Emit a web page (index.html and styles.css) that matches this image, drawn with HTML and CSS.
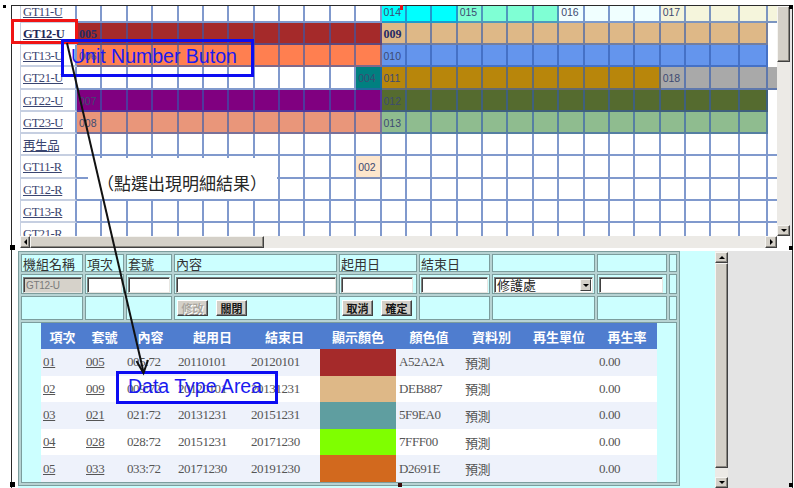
FILE: index.html
```html
<!DOCTYPE html>
<html lang="zh-Hant">
<head>
<meta charset="utf-8">
<title>機組套號排程</title>
<link rel="stylesheet" href="styles.css">
</head>
<body>
<div class="doc">
  <div class="shot">
    <!-- schedule frame -->
    <div class="upper">
      <div class="gutter g-up"></div>
      <div class="plan-view">
        <table class="plan">
          <colgroup>
            <col class="col-unit">
            <col><col><col><col><col><col><col><col><col><col>
            <col><col><col><col><col><col><col><col><col><col>
            <col><col><col><col><col>
            <col class="col-wide"><col class="col-wide"><col class="col-wide">
          </colgroup>
          <tbody>
            <tr class="r-a">
              <th><a href="#">GT11-U</a></th>
              <td></td><td></td><td></td><td></td><td></td><td></td><td></td><td></td><td></td><td></td><td></td><td></td>
              <td><span>014</span></td><td></td><td></td>
              <td><span>015</span></td><td></td><td></td><td></td>
              <td><span>016</span></td><td></td><td></td><td></td>
              <td><span>017</span></td><td></td><td></td><td></td><td></td>
            </tr>
            <tr class="r-b">
              <th><a href="#" class="on">GT12-U</a></th>
              <td><b>005</b></td><td></td><td></td><td></td><td></td><td></td><td></td><td></td><td></td><td></td><td></td><td></td>
              <td><b>009</b></td><td></td><td></td><td></td><td></td><td></td><td></td><td></td><td></td><td></td><td></td><td></td><td></td><td></td><td></td>
            </tr>
            <tr class="r-c">
              <th><a href="#">GT13-U</a></th>
              <td><span>006</span></td><td></td><td></td><td></td><td></td><td></td><td></td><td></td><td></td><td></td><td></td><td></td>
              <td><span>010</span></td><td></td><td></td><td></td><td></td><td></td><td></td><td></td><td></td><td></td><td></td><td></td><td></td><td></td><td></td>
            </tr>
            <tr class="r-d">
              <th><a href="#">GT21-U</a></th>
              <td></td><td></td><td></td><td></td><td></td><td></td><td></td><td></td><td></td><td></td><td></td>
              <td><span>004</span></td>
              <td><span>011</span></td><td></td><td></td><td></td><td></td><td></td><td></td><td></td><td></td><td></td><td></td>
              <td><span>018</span></td><td></td><td></td><td></td><td></td>
            </tr>
            <tr class="r-e">
              <th><a href="#">GT22-U</a></th>
              <td><span>007</span></td><td></td><td></td><td></td><td></td><td></td><td></td><td></td><td></td><td></td><td></td><td></td>
              <td><span>012</span></td><td></td><td></td><td></td><td></td><td></td><td></td><td></td><td></td><td></td><td></td><td></td><td></td><td></td><td></td>
            </tr>
            <tr class="r-f">
              <th><a href="#">GT23-U</a></th>
              <td><span>008</span></td><td></td><td></td><td></td><td></td><td></td><td></td><td></td><td></td><td></td><td></td><td></td>
              <td><span>013</span></td><td></td><td></td><td></td><td></td><td></td><td></td><td></td><td></td><td></td><td></td><td></td><td></td><td></td><td></td>
            </tr>
            <tr>
              <th><a href="#">再生品</a></th>
              <td></td><td></td><td></td><td></td><td></td><td></td><td></td><td></td><td></td><td></td><td></td><td></td><td></td><td></td>
              <td></td><td></td><td></td><td></td><td></td><td></td><td></td><td></td><td></td><td></td><td></td><td></td><td></td><td></td>
            </tr>
            <tr class="r-h">
              <th><a href="#">GT11-R</a></th>
              <td></td><td></td><td></td><td></td><td></td><td></td><td></td><td></td><td></td><td></td><td></td>
              <td><span>002</span></td>
              <td></td><td></td><td></td><td></td><td></td><td></td><td></td><td></td><td></td><td></td><td></td><td></td><td></td><td></td><td></td><td></td>
            </tr>
            <tr>
              <th><a href="#">GT12-R</a></th>
              <td></td><td></td><td></td><td></td><td></td><td></td><td></td><td></td><td></td><td></td><td></td><td></td><td></td><td></td>
              <td></td><td></td><td></td><td></td><td></td><td></td><td></td><td></td><td></td><td></td><td></td><td></td><td></td><td></td>
            </tr>
            <tr>
              <th><a href="#">GT13-R</a></th>
              <td></td><td></td><td></td><td></td><td></td><td></td><td></td><td></td><td></td><td></td><td></td><td></td><td></td><td></td>
              <td></td><td></td><td></td><td></td><td></td><td></td><td></td><td></td><td></td><td></td><td></td><td></td><td></td><td></td>
            </tr>
            <tr>
              <th><a href="#">GT21-R</a></th>
              <td></td><td></td><td></td><td></td><td></td><td></td><td></td><td></td><td></td><td></td><td></td><td></td><td></td><td></td>
              <td></td><td></td><td></td><td></td><td></td><td></td><td></td><td></td><td></td><td></td><td></td><td></td><td></td><td></td>
            </tr>
          </tbody>
        </table>
      </div>
      <div class="vbar vbar-up">
        <div class="sb-thumb thumb-up"></div>
        <div class="sb-track"></div>
        <div class="sb-btn sb-v"><i class="tri tri-down"></i></div>
      </div>
      <div class="edge"></div>
      <div class="hbar">
        <div class="sb-btn sb-h sb-left"><i class="tri tri-left"></i></div>
        <div class="sb-thumb thumb-h"></div>
        <div class="sb-track"></div>
        <div class="sb-btn sb-h sb-right"><i class="tri tri-right"></i></div>
      </div>
      <div class="corner"></div>
    </div>

    <!-- detail frame -->
    <div class="lower">
      <div class="gutter"></div>
      <div class="panel">
        <table class="editor">
          <tr class="ed-head">
            <td class="w1">機組名稱</td>
            <td class="w2">項次</td>
            <td class="w3">套號</td>
            <td class="w4">內容</td>
            <td class="w5">起用日</td>
            <td class="w6">結束日</td>
            <td class="w7"></td>
            <td class="w8"></td>
            <td class="w9"></td>
          </tr>
          <tr class="ed-fields">
            <td><input class="fld f-unit" value="GT12-U" disabled></td>
            <td><input class="fld f-item"></td>
            <td><input class="fld f-set"></td>
            <td><input class="fld f-text"></td>
            <td><input class="fld f-start"></td>
            <td><input class="fld f-end"></td>
            <td><div class="pick"><span>修護處</span><span class="pick-btn"><i class="tri tri-down"></i></span></div></td>
            <td><input class="fld f-rate"></td>
            <td></td>
          </tr>
          <tr class="ed-actions">
            <td></td><td></td><td></td>
            <td><button class="btn" disabled>修改</button><button class="btn">關閉</button></td>
            <td><button class="btn">取消</button><button class="btn">確定</button></td>
            <td></td><td></td><td></td><td></td>
          </tr>
          <tr class="ed-list">
            <td colspan="9">
              <table class="sets">
                <colgroup>
                  <col class="k-item"><col class="k-set"><col class="k-text"><col class="k-date"><col class="k-date2">
                  <col class="k-swatch"><col class="k-hex"><col class="k-type"><col class="k-unit"><col class="k-rate">
                </colgroup>
                <thead>
                  <tr><th>項次</th><th>套號</th><th>內容</th><th>起用日</th><th>結束日</th><th>顯示顏色</th><th>顏色值</th><th>資料別</th><th>再生單位</th><th>再生率</th></tr>
                </thead>
                <tbody>
                  <tr><td><a href="#">01</a></td><td><a href="#">005</a></td><td>005:72</td><td>20110101</td><td>20120101</td><td class="swatch" style="background:#A52A2A"></td><td class="pad3">A52A2A</td><td class="pad3">預測</td><td></td><td>0.00</td></tr>
                  <tr><td><a href="#">02</a></td><td><a href="#">009</a></td><td>009:72</td><td>20120101</td><td>20131231</td><td class="swatch" style="background:#DEB887"></td><td class="pad3">DEB887</td><td class="pad3">預測</td><td></td><td>0.00</td></tr>
                  <tr><td><a href="#">03</a></td><td><a href="#">021</a></td><td>021:72</td><td>20131231</td><td>20151231</td><td class="swatch" style="background:#5F9EA0"></td><td class="pad3">5F9EA0</td><td class="pad3">預測</td><td></td><td>0.00</td></tr>
                  <tr><td><a href="#">04</a></td><td><a href="#">028</a></td><td>028:72</td><td>20151231</td><td>20171230</td><td class="swatch" style="background:#7FFF00"></td><td class="pad3">7FFF00</td><td class="pad3">預測</td><td></td><td>0.00</td></tr>
                  <tr><td><a href="#">05</a></td><td><a href="#">033</a></td><td>033:72</td><td>20171230</td><td>20191230</td><td class="swatch" style="background:#D2691E"></td><td class="pad3">D2691E</td><td class="pad3">預測</td><td></td><td>0.00</td></tr>
                </tbody>
              </table>
            </td>
          </tr>
        </table>
      </div>
      <div class="vbar vbar-low">
        <div class="sb-btn sb-v"><i class="tri tri-up"></i></div>
        <div class="sb-thumb thumb-low"></div>
        <div class="sb-track"></div>
        <div class="sb-btn sb-v"><i class="tri tri-down"></i></div>
      </div>
      <div class="side"></div>
    </div>
  </div>

  <!-- frame handles -->
  <span class="handle h-tl"></span>
  <span class="handle h-tm"></span>
  <span class="handle h-tr"></span>
  <span class="handle h-ml"></span>
  <span class="handle h-mr"></span>
  <span class="handle h-bl"></span>
  <span class="handle h-bm"></span>
  <span class="handle h-br"></span>

  <!-- callouts -->
  <div class="hint">（點選出現明細結果）</div>
  <div class="box-red"></div>
  <div class="box-blue box-unit">Unit Number Buton</div>
  <div class="box-blue box-data">Data Type Area</div>
  <svg class="pointer" width="794" height="488" viewBox="0 0 794 488">
    <line x1="67" y1="43" x2="143.5" y2="372" stroke="#111" stroke-width="2"/>
    <polyline points="136.5,361 143.5,373 148,360" fill="none" stroke="#111" stroke-width="2"/>
  </svg>
</div>
</body>
</html>
```

FILE: styles.css
```css
* { box-sizing: border-box; }

html, body {
  margin: 0;
  padding: 0;
  background: #fff;
}

.doc {
  position: relative;
  width: 794px;
  height: 488px;
  overflow: hidden;
  background: #fff;
}

/* pasted screenshot frame */
.shot {
  margin: 5px 0 0 11px;
  width: 782px;
  height: 483px;
  border: 1px solid #2a2a2a;
  border-bottom: 0;
  display: flex;
  flex-direction: column;
  background: #fff;
}

/* ---------- upper: schedule grid ---------- */
.upper {
  display: grid;
  grid-template-columns: 8px 757px 13px 1fr;
  grid-template-rows: 230px 12px;
}

.gutter { background: #fff; }
.g-up { grid-row: 1 / 3; }

.plan-view {
  overflow: hidden;
  background: #fff;
}

.edge {
  grid-column: 4;
  grid-row: 1 / 3;
  background: #e6e6e6;
}

.corner { background: #fff; }

.plan {
  border-collapse: separate;
  border-spacing: 0;
  table-layout: fixed;
  width: 777.25px;
  margin-top: -5.5px;
}

.plan col { width: 25.39px; }
.plan col.col-unit { width: 57px; }
.plan col.col-wide { width: 28.5px; }

.plan tr { height: 22.25px; }

.plan th {
  border-left: 1px solid #c6cfe1;
  border-bottom: 2px solid #c6cfe1;
  border-right: 2px solid rgba(50, 90, 175, 0.62);
  padding: 0 0 0 2px;
  text-align: left;
  font-weight: normal;
  white-space: nowrap;
  background: #fff;
}

.plan th a {
  font: 12.5px "Liberation Serif", "Noto Sans CJK TC", serif;
  letter-spacing: -0.4px;
  color: #3a4570;
  text-decoration: underline;
}

.plan th a.on {
  font-weight: bold;
  color: #1f2757;
}

.plan td {
  border-right: 2px solid rgba(50, 90, 175, 0.62);
  border-bottom: 2px solid rgba(50, 90, 175, 0.62);
  padding: 0 0 0 2px;
  white-space: nowrap;
  background: #fff;
}

.plan td span {
  font: 10.5px "Liberation Sans", sans-serif;
  color: #3d4b72;
}

.plan td b {
  font: bold 12px "Liberation Serif", serif;
  color: #252a66;
}

/* set colours per unit row */
.r-a td:nth-child(n+14):nth-child(-n+16) { background: #00ffff; }
.r-a td:nth-child(n+17):nth-child(-n+20) { background: #7fffd4; }
.r-a td:nth-child(n+21):nth-child(-n+24) { background: #f0ffff; }
.r-a td:nth-child(n+25) { background: #f5f5dc; }

.r-b td:nth-child(-n+13) { background: #a52a2a; }
.r-b td:nth-child(n+14) { background: #deb887; }

.r-c td:nth-child(-n+13) { background: #ff7f50; }
.r-c td:nth-child(n+14) { background: #6495ed; }

.r-d td:nth-child(13) { background: #008080; }
.r-d td:nth-child(n+14):nth-child(-n+24) { background: #b8860b; }
.r-d td:nth-child(n+25) { background: #a9a9a9; }

.r-e td:nth-child(-n+13) { background: #800080; }
.r-e td:nth-child(n+14) { background: #556b2f; }

.r-f td:nth-child(-n+13) { background: #e9967a; }
.r-f td:nth-child(n+14) { background: #8fbc8f; }

.r-h td:nth-child(13) { background: #fde6cc; }

/* classic scrollbars */
.vbar {
  display: flex;
  flex-direction: column;
  background: #eceae6;
}

.hbar {
  display: flex;
  background: #eceae6;
}

.sb-track {
  flex: 1;
  background: #eceae6;
}

.sb-btn,
.sb-thumb {
  background: #d4d0c8;
  border: 1px solid;
  border-color: #f6f5f2 #404040 #404040 #f6f5f2;
  box-shadow: inset -1px -1px 0 #8a8780;
}

.sb-btn {
  display: flex;
  align-items: center;
  justify-content: center;
}

.sb-v { height: 11px; flex: none; }
.sb-left { width: 10px; }
.sb-right { width: 12px; }

.thumb-up { height: 56px; flex: none; }
.thumb-h { width: 234px; flex: none; }
.thumb-low { height: 205px; flex: none; }

.tri {
  display: block;
  width: 0;
  height: 0;
  border-style: solid;
  border-color: transparent;
}

.tri-down { border-width: 3px 3px 0 3px; border-top-color: #000; }
.tri-up { border-width: 0 3px 3px 3px; border-bottom-color: #000; }
.tri-left { border-width: 3px 3px 3px 0; border-right-color: #000; }
.tri-right { border-width: 3px 0 3px 3px; border-left-color: #000; }

/* ---------- lower: detail editor ---------- */
.lower {
  flex: 1;
  display: grid;
  grid-template-columns: 6px 697px 13px 1fr;
  padding-top: 3px;
  background: #fff;
  min-height: 0;
}

.panel {
  background: #ccffff;
  overflow: hidden;
}

.vbar-low {
  padding-top: 1px;
  background: #eceae6;
}

.side { background: #e4e4e4; }

.editor {
  border-collapse: separate;
  border-spacing: 2px;
  border: 1px solid #7c9d9d;
  background: #b7d3d3;
  table-layout: fixed;
  width: 662px;
}

.editor > tbody > tr > td {
  background: #ccffff;
  border: 1px solid #7c9d9d;
  padding: 0 0 0 1px;
  vertical-align: middle;
}

.w1 { width: 62px; }
.w2 { width: 39px; }
.w3 { width: 46px; }
.w4 { width: 163px; }
.w5 { width: 78px; }
.w6 { width: 71px; }
.w7 { width: 103px; }
.w8 { width: 70px; }
.w9 { width: 8px; }

.ed-head { height: 18px; }
.editor > tbody > .ed-head > td {
  font: 13px "Noto Sans CJK TC", sans-serif;
  line-height: 15px;
  color: #333;
  white-space: nowrap;
  overflow: hidden;
}

.ed-fields { height: 20px; }
.editor > tbody > .ed-fields > td {
  padding: 2px 0 0 1px;
  vertical-align: top;
}

.fld {
  display: block;
  height: 16px;
  margin: 0;
  padding: 0 2px;
  border: 1px solid;
  border-color: #808080 #e8e6e2 #e8e6e2 #808080;
  box-shadow: inset 1px 1px 0 #404040;
  background: #fff;
  font: 10px "Liberation Sans", sans-serif;
  color: #000;
  outline: none;
}

.fld:disabled {
  background: #d6d2ca;
  color: #7a7a7a;
  letter-spacing: -0.3px;
}

.f-unit { width: 59px; }
.f-item { width: 35px; }
.f-set { width: 42px; }
.f-text { width: 160px; }
.f-start { width: 72px; }
.f-end { width: 67px; }
.f-rate { width: 64px; }

.pick {
  display: flex;
  align-items: center;
  justify-content: space-between;
  width: 99px;
  height: 16px;
  padding-left: 2px;
  border: 1px solid;
  border-color: #808080 #e8e6e2 #e8e6e2 #808080;
  box-shadow: inset 1px 1px 0 #404040;
  background: #fff;
  font: 13px "Noto Sans CJK TC", sans-serif;
  line-height: 14px;
  color: #222;
}

.pick-btn {
  display: flex;
  align-items: center;
  justify-content: center;
  width: 11px;
  height: 12px;
  margin-right: 1px;
  background: #d4d0c8;
  border: 1px solid;
  border-color: #f6f5f2 #404040 #404040 #f6f5f2;
}

.ed-actions { height: 24px; }
.editor > tbody > .ed-actions > td {
  padding: 3px 0 0 2px;
  vertical-align: top;
  white-space: nowrap;
}

.btn {
  display: inline-block;
  vertical-align: top;
  width: 31px;
  height: 16px;
  margin: 0 8px 0 0;
  padding: 0;
  background: #d4d0c8;
  border: 1px solid;
  border-color: #fff #404040 #404040 #fff;
  box-shadow: inset -1px -1px 0 #808080;
  font: bold 11px "Noto Sans CJK TC", sans-serif;
  line-height: 13px;
  color: #151515;
}

.btn:disabled {
  color: #a9a69f;
  text-shadow: 1px 1px 0 #fff;
}

.ed-list { height: 161px; }
.editor > tbody > .ed-list > td {
  padding: 0;
  vertical-align: top;
}

/* set list */
.sets {
  width: 616px;
  margin: 0 auto;
  border-collapse: collapse;
  table-layout: fixed;
}

.k-item { width: 43px; }
.k-set { width: 41px; }
.k-text { width: 51px; }
.k-date { width: 73px; }
.k-date2 { width: 71px; }
.k-swatch { width: 76px; }
.k-hex { width: 66px; }
.k-type { width: 59px; }
.k-unit { width: 76px; }
.k-rate { width: 60px; }

.sets thead tr { height: 26px; }

.sets th {
  background: #4f7dcf;
  color: #fff;
  font: bold 13px "Noto Sans CJK TC", sans-serif;
  text-align: center;
  padding: 0;
  white-space: nowrap;
}

.sets tbody tr { height: 26.6px; }
.sets tbody tr:nth-child(odd) { background: #eef2fb; }
.sets tbody tr:nth-child(even) { background: #fff; }

.sets td {
  border: 0;
  padding: 0 0 0 2px;
  font: 13px "Liberation Serif", "Noto Sans CJK TC", serif;
  letter-spacing: -0.4px;
  color: #555;
  white-space: nowrap;
}

.sets td.pad3 { padding-left: 3px; }
.sets td.swatch { padding: 0; }

.sets a {
  color: #555;
  text-decoration: underline;
}

/* ---------- selection handles on the pasted frame ---------- */
.handle {
  position: absolute;
  background: #000;
}

.h-tl { left: 3px; top: 5px; width: 3px; height: 3px; }
.h-tm { left: 400px; top: 5px; width: 3px; height: 5px; background: #e0141a; }
.h-tr { left: 789px; top: 5px; width: 4px; height: 4px; }
.h-ml { left: 10px; top: 245px; width: 5px; height: 5px; }
.h-mr { left: 789px; top: 246px; width: 4px; height: 4px; }
.h-bl { left: 10px; top: 482px; width: 5px; height: 5px; }
.h-bm { left: 398px; top: 483px; width: 4px; height: 4px; background: #3a0a0a; }
.h-br { left: 789px; top: 483px; width: 4px; height: 4px; }

/* ---------- callouts ---------- */
.hint {
  position: absolute;
  left: 88px;
  top: 158px;
  width: 189px;
  height: 41px;
  padding: 16px 0 0 9px;
  background: #fff;
  font: 17px "Noto Sans CJK TC", sans-serif;
  line-height: 17px;
  color: #262626;
  white-space: nowrap;
}

.box-red {
  position: absolute;
  left: 11px;
  top: 19px;
  width: 67px;
  height: 25px;
  border: 3px solid #f01414;
}

.box-blue {
  position: absolute;
  border: 3px solid #0c0cf2;
  font: 19.5px "Liberation Sans", Arial, sans-serif;
  line-height: 20px;
  color: #1a1af0;
  white-space: nowrap;
}

.box-unit {
  left: 61px;
  top: 39px;
  width: 193px;
  height: 38px;
  padding: 4px 0 0 7px;
}

.box-data {
  left: 116px;
  top: 371px;
  width: 162px;
  height: 33px;
  padding: 2px 0 0 9px;
}

.pointer {
  position: absolute;
  left: 0;
  top: 0;
  pointer-events: none;
}
```
